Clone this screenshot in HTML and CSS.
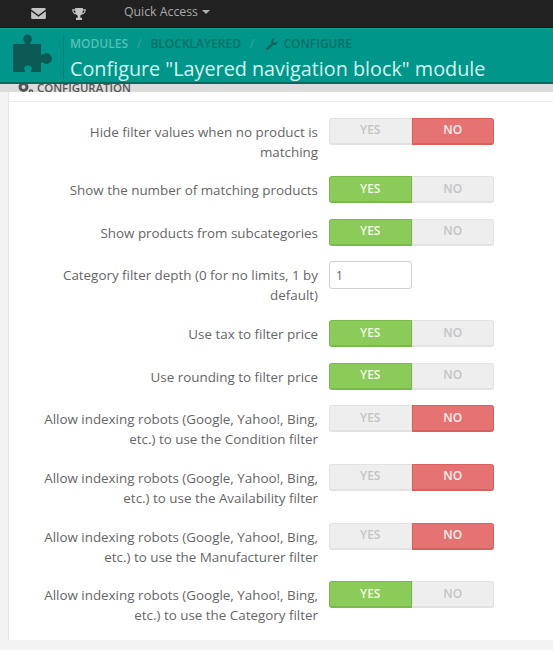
FILE: index.html
```html
<!DOCTYPE html>
<html lang="en">
<head>
    <meta charset="UTF-8">
    <title>Configure "Layered navigation block" module</title>
    <link rel="stylesheet" href="styles.css">
</head>
<body>

<div class="topbar">
    <svg class="top-icon mail" viewBox="0 0 16 12"><path d="M0 1.500Q0 0 1.500 0h13Q16 0 16 1.500L8 7.500zM0 3.500l8 6 8-6V11q0 1-1 1H1q-1 0-1-1z"/></svg>
    <svg class="top-icon cup" viewBox="0 0 16 14"><path d="M3.500 0h9v1.500H16c0 3.500-1.500 5.500-4.800 6.200L9.500 9v2.500H11.500V14h-7v-2.500h2V9L4.800 7.700C1.500 7 0 5 0 1.500h3.500zM1.500 3c.2 1.500.9 2.500 2.500 3.200L3.500 3zM14.500 3h-2L12 6.200c1.600-.7 2.300-1.700 2.500-3.200z"/></svg>
    <span class="quick">Quick Access <i class="caret"></i></span>
</div>

<div class="header">
    <svg class="puzzle" viewBox="0 0 40 39"><path d="M1 10h9.500c1.500 0 1.500-1 1-2a4.400 4.400 0 1 1 6 0c-.5 1-.5 2 1 2H28v9.500c0 1.500 1 1.500 2.500.8a5.200 5.200 0 1 1 0 8.400c-1.500-.8-2.500-.8-2.500.8V38H19c-1.500 0-1.500-1-.5-2.500 1.200-2-1-4-3.500-4s-4.700 2-3.500 4c1 1.500 1 2.500-.5 2.500H1q-1 0-1-1V11q0-1 1-1z"/></svg>
    <div class="header-text">
        <div class="crumbs">
            <span class="crumb-link">MODULES</span>
            <span class="sep">/</span>
            <span>BLOCKLAYERED</span>
            <span class="sep">/</span>
            <span class="crumb-icon">
                <svg class="wrench" viewBox="0 0 12 12"><path d="M11.800 3a3.500 3.500 0 0 1-4.700 3.700L2.600 11.600a1.200 1.200 0 0 1-2.100-1.900l5-4.500A3.500 3.500 0 0 1 9 .2L7 2.300l.5 2 2 .6z"/></svg>
                CONFIGURE
            </span>
        </div>
        <h1>Configure "Layered navigation block" module</h1>
    </div>
</div>

<div class="band">
    <div class="panel-head">
        <svg class="gears" viewBox="0 0 16 12"><circle cx="5.500" cy="5" r="3.500" fill="none" stroke="#555" stroke-width="3"/><circle cx="13" cy="9.500" r="1.500" fill="none" stroke="#555" stroke-width="1.500"/></svg>
        CONFIGURATION
    </div>
</div>

<div class="panel">
    <div class="panel-rule"></div>

    <div class="row row-double">
        <label>Hide filter values when no product is matching</label>
        <div class="toggle"><span class="opt">YES</span><span class="opt no">NO</span></div>
    </div>
    <div class="row">
        <label>Show the number of matching products</label>
        <div class="toggle"><span class="opt yes">YES</span><span class="opt">NO</span></div>
    </div>
    <div class="row">
        <label>Show products from subcategories</label>
        <div class="toggle"><span class="opt yes">YES</span><span class="opt">NO</span></div>
    </div>
    <div class="row row-double">
        <label>Category filter depth (0 for no limits, 1 by default)</label>
        <input class="num" type="text" value="1">
    </div>
    <div class="row">
        <label>Use tax to filter price</label>
        <div class="toggle"><span class="opt yes">YES</span><span class="opt">NO</span></div>
    </div>
    <div class="row">
        <label>Use rounding to filter price</label>
        <div class="toggle"><span class="opt yes">YES</span><span class="opt">NO</span></div>
    </div>
    <div class="row row-double">
        <label>Allow indexing robots (Google, Yahoo!, Bing, etc.) to use the Condition filter</label>
        <div class="toggle"><span class="opt">YES</span><span class="opt no">NO</span></div>
    </div>
    <div class="row row-double">
        <label>Allow indexing robots (Google, Yahoo!, Bing, etc.) to use the Availability filter</label>
        <div class="toggle"><span class="opt">YES</span><span class="opt no">NO</span></div>
    </div>
    <div class="row row-double">
        <label>Allow indexing robots (Google, Yahoo!, Bing, etc.) to use the Manufacturer filter</label>
        <div class="toggle"><span class="opt">YES</span><span class="opt no">NO</span></div>
    </div>
    <div class="row row-double">
        <label>Allow indexing robots (Google, Yahoo!, Bing, etc.) to use the Category filter</label>
        <div class="toggle"><span class="opt yes">YES</span><span class="opt">NO</span></div>
    </div>
</div>

</body>
</html>
```

FILE: styles.css
```css
html, body { height: 100%; }
body { font-family: 'Open Sans', sans-serif; background: #f3f3f3; margin: 0; overflow: hidden; color: #666; }

.topbar { background: #212121; height: 27px; display: flex; align-items: center; border-bottom: 1px solid #111; }
.top-icon { fill: #c4c4c4; }
.mail { width: 15px; height: 11px; margin-left: 31px; }
.cup { width: 14px; height: 12px; margin-left: 26px; }
.quick { font-size: 12.3px; color: #a9a9a9; margin-left: 38px; margin-top: -4px; }
.caret { display: inline-block; border: 4px solid transparent; border-top-color: #b0b0b0; border-bottom: 0; vertical-align: 2px; margin-left: 1px; }

.header { background: #00978a; height: 53px; display: flex; border-top: 1px solid #0aa596; border-bottom: 2px solid #046a60; }
.puzzle { width: 40px; height: 39px; fill: #0b5a56; margin: 5px 0 0 13px; flex: none; }
.header-text { border-left: 1px solid #0b7a70; margin: 6px 0 0 10px; padding-left: 6px; height: 44px; }
.crumbs { font-size: 12px; color: #0b6a64; line-height: 16px; white-space: nowrap; display: flex; gap: 7px; font-weight: 600; opacity: .9; margin-top: 1px; }
.crumb-link { color: #62c4bb; }
.sep { color: #3bab9f; margin: 0 2px; font-weight: 400; }
.crumb-icon { display: flex; align-items: center; gap: 5px; margin-left: 3px; }
.wrench { width: 12px; height: 12px; fill: #0b5f5a; }
h1 { margin: 3px 0 0; font-size: 19.8px; font-weight: 400; line-height: 27px; color: #d4f4ef; white-space: nowrap; }

.band { background: #dcdcdc; height: 8px; overflow: hidden; display: flex; align-items: flex-end; padding-left: 18px; }
.panel-head { font-size: 11.4px; font-weight: 600; line-height: 14px; color: #555; display: flex; align-items: center; gap: 3px; flex: none; margin-bottom: -3px; }
.gears { width: 16px; height: 12px; }

.panel { background: #fff; margin-left: 8px; border-left: 1px solid #e6e6e6; height: 548px; }
.panel-rule { height: 9px; border-bottom: 1px solid #eee; margin-bottom: 15.500px; }

.row { display: flex; margin-bottom: 15.500px; min-height: 27px; }
.row-double { margin-bottom: 14.800px; }
label { width: 285px; margin-left: 24px; margin-right: 11px; text-align: right; font-size: 13.400px; line-height: 20px; padding-top: 4px; flex: none; }

.toggle { display: flex; width: 165px; height: 27px; border-radius: 3px; font-size: 12px; font-weight: 600; box-sizing: border-box; }
.opt { flex: 1; background: #eee; color: #c4c4c4; display: flex; align-items: center; justify-content: center; border: 1px solid #e2e2e2; border-bottom-width: 2px; padding-bottom: 2px; }
.opt:first-child { border-radius: 3px 0 0 3px; }
.opt:last-child { border-radius: 0 3px 3px 0; }
.yes { background: #8bcb5a; border-color: #79bb4a; color: #f2fbe6; }
.no { background: #e57373; border-color: #d9605f; color: #fdeeee; }

.num { width: 83px; height: 28px; box-sizing: border-box; border: 1px solid #d0d0d0; border-radius: 3px; padding: 0 6px; font: 12px 'Open Sans', sans-serif; color: #666; }
```
